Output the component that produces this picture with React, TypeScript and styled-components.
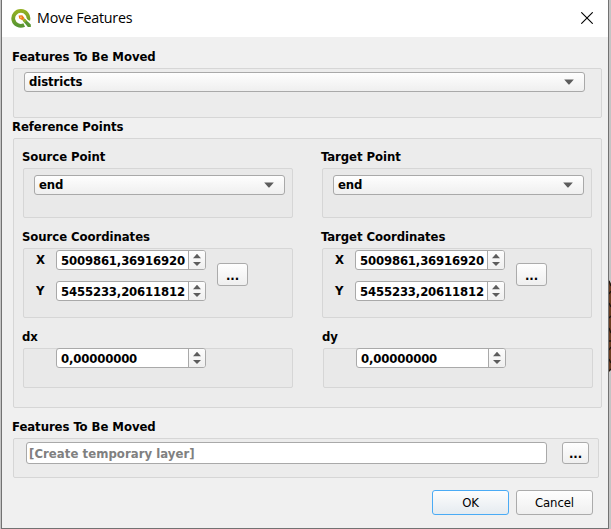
import React from 'react';
import styled, { createGlobalStyle, css } from 'styled-components';

const GlobalStyle = createGlobalStyle`
  * { box-sizing: border-box; }
  body { margin: 0; background: #c4c4c4; overflow: hidden; }
  button, input { margin: 0; }
`;

const uiFont = css`
  font-family: 'DejaVu Sans Condensed', 'DejaVu Sans', sans-serif;
  font-stretch: condensed;
  font-size: 13px;
`;

const Desktop = styled.div`
  display: flex;
  width: 611px;
  height: 529px;
  background: #c4c4c4;
  padding-left: 1px;
`;

const Dialog = styled.main`
  ${uiFont}
  width: 608px;
  height: 529px;
  display: flex;
  flex-direction: column;
  border: 1px solid #727272;
  border-top: 0;
  background: #f0f0f0;
  color: #000;
  font-weight: bold;
`;

const MapSliver = styled.svg`
  width: 2px;
  height: 92px;
  margin-top: 280px;
`;

const TitleBar = styled.header`
  display: flex;
  align-items: center;
  flex: none;
  height: 37px;
  padding: 0 15px 1px 9px;
  background: #fff;
`;

const Title = styled.h1`
  flex: 1;
  margin: 0 0 0 5px;
  font: 400 14.3px/20px 'Open Sans', sans-serif;
  letter-spacing: -0.22px;
  white-space: nowrap;
`;

const CloseButton = styled.button`
  display: flex;
  padding: 0;
  border: 0;
  background: none;
`;

const Body = styled.div`
  display: flex;
  flex-direction: column;
  padding: 9px 0 0 11px;
`;

const Caption = styled.div`
  height: 22px;
  line-height: 21px;
  margin-left: -1px;
  letter-spacing: -0.06px;
  white-space: nowrap;
`;

const Group = styled.div<{ $w: number; $h: number; $pad: string; $inner?: boolean }>`
  display: flex;
  width: ${(p) => p.$w}px;
  height: ${(p) => p.$h}px;
  padding: ${(p) => p.$pad};
  align-items: flex-start;
  border: 1px solid #d6d6d6;
  border-radius: 2px;
  background: ${(p) => (p.$inner ? '#e9e9e9' : '#ececec')};
`;

const Section = styled.section<{ $gap?: number; $indent?: number }>`
  margin-top: ${(p) => p.$gap ?? 0}px;
  padding-left: ${(p) => p.$indent ?? 0}px;
`;

const PointGrid = styled.div`
  display: grid;
  grid-template-columns: 299px 271px;
  grid-template-rows: 80px 100px 70px;
`;

const ComboBox = styled.div<{ $w: number }>`
  display: flex;
  flex: none;
  align-items: center;
  justify-content: space-between;
  width: ${(p) => p.$w}px;
  height: 20px;
  padding: 0 10px 0 4px;
  line-height: 18px;
  border: 1px solid #a9a9a9;
  border-radius: 3px;
  background: linear-gradient(#fefefe, #efefef);
  letter-spacing: -0.08px;
`;

const CoordinateRows = styled.div`
  display: flex;
  flex-direction: column;
  gap: 11px;
`;

const CoordinateRow = styled.label`
  display: flex;
  align-items: center;
  height: 20px;
`;

const AxisName = styled.span`
  width: 20px;
  height: 20px;
  line-height: 20px;
`;

const SpinFrame = styled.span`
  display: flex;
  flex: none;
  width: 150px;
  height: 20px;
  border: 1px solid #a9a9a9;
  border-radius: 3px;
  background: #fff;
  overflow: hidden;
`;

const SpinValue = styled.span`
  width: 131px;
  padding-left: 4px;
  line-height: 19px;
  letter-spacing: -0.16px;
`;

const SpinArrows = styled.span`
  display: flex;
  align-items: center;
  justify-content: center;
  width: 17px;
  border-left: 1px solid #a9a9a9;
  background: linear-gradient(#fdfdfd, #efefef);
`;

const PushButton = styled.button<{ $w: number; $h: number; $default?: boolean; $margin?: string; $dots?: boolean }>`
  ${uiFont}
  flex: none;
  width: ${(p) => p.$w}px;
  height: ${(p) => p.$h}px;
  margin: ${(p) => p.$margin ?? '0'};
  padding: ${(p) => (p.$dots ? '2px 0 0' : '1px 0 0')};
  line-height: 18px;
  letter-spacing: -0.1px;
  font-weight: ${(p) => (p.$dots ? 'bold' : 'normal')};
  color: #000;
  border: 1px solid ${(p) => (p.$default ? '#4aabf5' : '#ababab')};
  border-radius: 3px;
  background: ${(p) => (p.$default ? 'linear-gradient(#fdfdfd, #e5ebf0)' : 'linear-gradient(#fefefe, #efefef)')};
`;

const LayerInput = styled.input`
  ${uiFont}
  width: 521px;
  height: 22px;
  padding: 0 2px;
  font-weight: bold;
  letter-spacing: 0.05px;
  border: 1px solid #a9a9a9;
  border-radius: 3px;
  background: #fff;
  &::placeholder { color: #808080; opacity: 1; }
`;

const Footer = styled.footer`
  display: flex;
  gap: 7px;
  margin: 12px 0 0 419px;
`;

const QgisLogo = () => (
  <svg width="21" height="20" viewBox="0 0 21 20">
    <defs>
      <linearGradient id="ring" x1="0" y1="0" x2="0" y2="1">
        <stop offset="0" stopColor="#93b023" />
        <stop offset="1" stopColor="#589632" />
      </linearGradient>
    </defs>
    <path d="M13.2 17A7.6 7.4 0 1 1 17.2 12.2" fill="none" stroke="url(#ring)" strokeWidth="3.8" />
    <path d="M10.4 11.8l2.2-2.4h2.2l5 5.6v4h-3.4z" fill="#fff" />
    <path d="M11.6 12.4l1.9-1.9 6.3 5.9V19h-2.9z" fill="#589632" />
    <path d="M11.6 12.4l1.9-1.9 2.2 2-1.9 2.1z" fill="#93b023" />
    <path d="M7.6 7.4l3.7-.2 2.1 2.9-1.9 2.1-3.3-1.6z" fill="#ee7913" />
    <path d="M9 8.6h1.8v1.6H9z" fill="#f7b45f" />
  </svg>
);

const CloseIcon = () => (
  <svg width="12" height="12" viewBox="0 0 12 12">
    <path d="M.3.3l11.4 11.4M11.7.3L.3 11.7" stroke="#000" strokeWidth="1.1" />
  </svg>
);

const DownArrow = () => (
  <svg width="10" height="6" viewBox="0 0 10 6">
    <path d="M.2.4h9.6L5.4 5.4h-.8z" fill="#5c5c5c" />
  </svg>
);

const UpDownArrows = () => (
  <svg width="8" height="14" viewBox="0 0 8 14">
    <path d="M0 5.3L4 .8l4 4.5zM0 9h8l-4 4z" fill="#5c5c5c" />
  </svg>
);

const SpinBox = ({ value }: { value: string }) => (
  <SpinFrame>
    <SpinValue>{value}</SpinValue>
    <SpinArrows><UpDownArrows /></SpinArrows>
  </SpinFrame>
);

const PointSection = ({ title }: { title: string }) => (
  <Section>
    <Caption>{title}</Caption>
    <Group $inner $w={270} $h={50} $pad="6px 0 0 10px">
      <ComboBox $w={251}>end<DownArrow /></ComboBox>
    </Group>
  </Section>
);

const CoordinateSection = ({ title }: { title: string }) => (
  <Section>
    <Caption>{title}</Caption>
    <Group $inner $w={270} $h={70} $pad="1px 12px">
      <CoordinateRows>
        <CoordinateRow><AxisName>X</AxisName><SpinBox value="5009861,36916920" /></CoordinateRow>
        <CoordinateRow><AxisName>Y</AxisName><SpinBox value="5455233,20611812" /></CoordinateRow>
      </CoordinateRows>
      <PushButton $dots $w={31} $h={23} $margin="13px 0 0 11px">...</PushButton>
    </Group>
  </Section>
);

const OffsetGroup = styled(Group)`
  & > ${SpinFrame} { margin-top: -1px; }
`;

const OffsetSection = ({ title, indent }: { title: string; indent?: number }) => (
  <Section $indent={indent}>
    <Caption>{title}</Caption>
    <OffsetGroup $inner $w={270} $h={40} $pad="0 0 0 32px">
      <SpinBox value="0,00000000" />
    </OffsetGroup>
  </Section>
);

export default function App() {
  return (
    <>
      <GlobalStyle />
      <Desktop>
        <Dialog>
          <TitleBar>
            <QgisLogo />
            <Title>Move Features</Title>
            <CloseButton aria-label="Close"><CloseIcon /></CloseButton>
          </TitleBar>
          <Body>
            <Section>
              <Caption>Features To Be Moved</Caption>
              <Group $w={589} $h={50} $pad="3px 10px">
                <ComboBox $w={561}>districts<DownArrow /></ComboBox>
              </Group>
            </Section>
            <Section $gap={-2}>
              <Caption>Reference Points</Caption>
              <Group $w={589} $h={270} $pad="7px 9px">
                <PointGrid>
                  <PointSection title="Source Point" />
                  <PointSection title="Target Point" />
                  <CoordinateSection title="Source Coordinates" />
                  <CoordinateSection title="Target Coordinates" />
                  <OffsetSection title="dx" />
                  <OffsetSection title="dy" indent={1} />
                </PointGrid>
              </Group>
            </Section>
            <Section $gap={8}>
              <Caption>Features To Be Moved</Caption>
              <Group $w={586} $h={40} $pad="3px 9px 0 12px">
                <LayerInput placeholder="[Create temporary layer]" />
                <PushButton $dots $w={27} $h={22} $margin="0 0 0 15px">...</PushButton>
              </Group>
            </Section>
            <Footer>
              <PushButton $default $w={77} $h={25}>OK</PushButton>
              <PushButton $w={77} $h={25}>Cancel</PushButton>
            </Footer>
          </Body>
        </Dialog>
        <MapSliver viewBox="0 0 2 92">
          <path d="M0 0l2 4v85l-2 3z" fill="#6b3d20" />
          <path d="M0 1l2 5M0 14l2-3M0 23l2 4M0 38l2-2M0 48l2 5M0 61h2M0 70l2-3M0 79l2 4M0 91l2-2" stroke="#20160f" strokeWidth="1.3" />
        </MapSliver>
      </Desktop>
    </>
  );
}
